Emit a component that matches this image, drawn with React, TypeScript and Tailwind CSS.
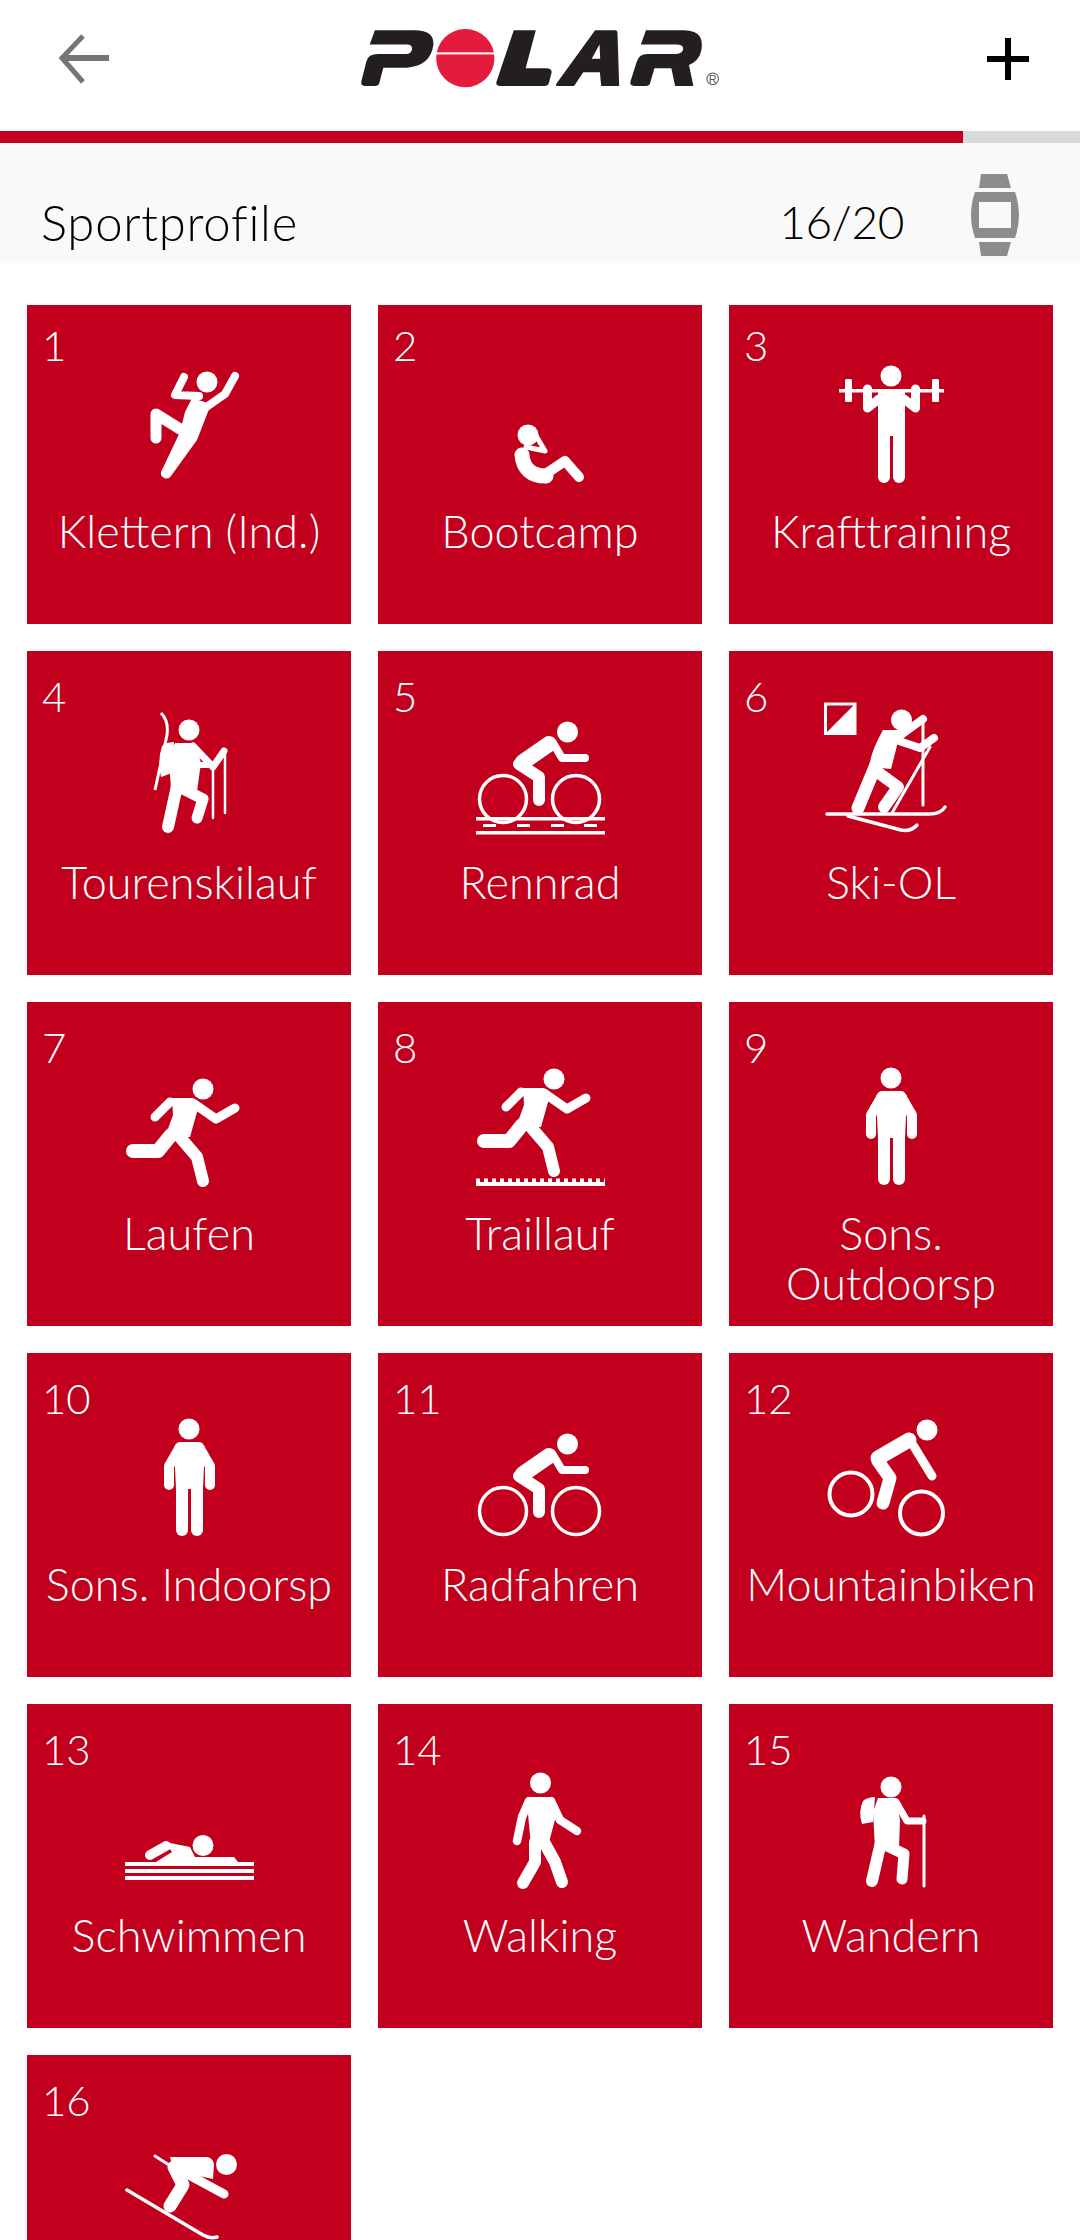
import React from 'react';

const FONT = "font-['Lato','Liberation_Sans',sans-serif]";

// icons are drawn in card coordinates (card = 324 wide), the svg shows y 50..206
const Line = ({ d, w }: { d: string; w: number }) => (
  <path d={d} fill="none" stroke="#fff" strokeWidth={w} strokeLinecap="round" strokeLinejoin="round" />
);
const Head = ({ x, y }: { x: number; y: number }) => <circle cx={x} cy={y} r={10.5} fill="#fff" />;

const Person = () => (
  <>
    <Head x={162} y={76} />
    <path d="M155 89H170Q175 89 178 94L176 136H149L147 94Q150 89 155 89Z" fill="#fff" />
    <Line d="M153 94L142 113V132" w={10} />
    <Line d="M172 94L183 113V132" w={10} />
    <Line d="M155 130V177" w={12} />
    <Line d="M170 130V177" w={12} />
  </>
);

const Runner = () => (
  <>
    <Head x={176} y={87} />
    <path d="M145 96H166L172 103L163 135H138L146 113Z" fill="#fff" />
    <Line d="M143 100L128 115" w={9} />
    <Line d="M166 101L189 117L208 106" w={9} />
    <Line d="M144 133L131 149H106" w={14} />
    <Line d="M152 134L170 155L176 179" w={12} />
  </>
);

const Rider = () => (
  <>
    <Head x={189.5} y={81} />
    <Line d="M171 93L145 111" w={16} />
    <Line d="M175 92L184 107H207" w={8} />
    <Line d="M141 113L161 126V149" w={12} />
    <circle cx={125} cy={148} r={23.5} fill="none" stroke="#fff" strokeWidth={3.5} />
    <circle cx={198} cy={148} r={23.5} fill="none" stroke="#fff" strokeWidth={3.5} />
  </>
);

const icons: Record<number, React.ReactNode> = {
  1: (
    <>
      <Head x={180} y={82} />
      <Line d="M157 77L148 95L172 96" w={8} />
      <Line d="M208 76L198 94L178 108" w={8} />
      <path d="M165 98L184 104L170 140L144 176A5.500 5.500 0 0 1 134 172L153 132L158 112Z" fill="#fff" />
      <Line d="M153 129L129 114V138" w={11} />
    </>
  ),
  2: (
    <>
      <circle cx={150} cy={135} r={10.5} fill="#fff" />
      <Line d="M157 134L167 151L148 147" w={5} />
      <Line d="M144 155Q146 176 168 176" w={15} />
      <Line d="M166 175L187 161L201 177" w={10} />
    </>
  ),
  3: (
    <>
      <Head x={162} y={76} />
      <rect x={110} y={89} width={105} height={3.500} fill="#fff" />
      <rect x={116} y={79} width={7} height={23} rx={1.500} fill="#fff" />
      <rect x={203} y={79} width={7} height={23} rx={1.500} fill="#fff" />
      <path d="M149 89H176L176 136H149Z" fill="#fff" />
      <Line d="M138.500 89V108L150 99" w={9} />
      <Line d="M186.500 89V108L175 99" w={9} />
      <Line d="M155 130V177" w={12} />
      <Line d="M170 130V177" w={12} />
    </>
  ),
  4: (
    <>
      <Head x={162} y={79} />
      <path d="M134 62Q142 70 140 84L128 139" fill="none" stroke="#fff" strokeWidth={3} />
      <path d="M135 95Q140 91 147 91L145 122L134 126Q130 110 135 95Z" fill="#fff" />
      <path d="M148 92H168L174 112L170 140L144 140L142 105Z" fill="#fff" />
      <Line d="M166 95L186 116L197 100" w={7} />
      <Line d="M170 114H187" w={6} />
      <Line d="M198 100V162" w={2.500} />
      <Line d="M186 118V167" w={2.500} />
      <Line d="M150 135L141 176" w={12} />
      <Line d="M152 136L176 148L170 167" w={11} />
    </>
  ),
  5: (
    <>
      <Rider />
      <rect x={98} y={166} width={129} height={3.500} fill="#fff" />
      <rect x={98} y={180} width={129} height={3.500} fill="#fff" />
      <rect x={105} y={173} width={13} height={3} fill="#fff" />
      <rect x={139} y={173} width={13} height={3} fill="#fff" />
      <rect x={173} y={173} width={13} height={3} fill="#fff" />
      <rect x={206} y={173} width={13} height={3} fill="#fff" />
    </>
  ),
  6: (
    <>
      <rect x={96.500} y={53} width={29.500} height={29.500} fill="none" stroke="#fff" strokeWidth={3} />
      <path d="M97 82L125 54V82Z" fill="#fff" />
      <Head x={172.500} y={69} />
      <path d="M154 79H172L162 118L140 116Q142 100 154 79Z" fill="#fff" />
      <Line d="M172 84L194 68" w={8} />
      <Line d="M170 90L191 97L205 87" w={8} />
      <Line d="M194 68V154" w={3} />
      <Line d="M201 96L163 162" w={3} />
      <Line d="M146 116L129 157" w={13} />
      <Line d="M147 120L169 136L155 156" w={12} />
      <path d="M98 163H200Q212 163 216 156" fill="none" stroke="#fff" strokeWidth={3.500} strokeLinecap="round" />
      <path d="M119 165L172 179Q182 181 188 174" fill="none" stroke="#fff" strokeWidth={3.500} strokeLinecap="round" />
    </>
  ),
  7: <Runner />,
  8: (
    <>
      <g transform="translate(0 -10)">
        <Runner />
      </g>
      <rect x={98} y={180} width={129} height={4} fill="#fff" />
      <path d="M98 178.500H227" stroke="#fff" strokeWidth={4} strokeDasharray="4 4" fill="none" />
    </>
  ),
  9: <Person />,
  10: <Person />,
  11: (
    <g transform="translate(0 10)">
      <Rider />
    </g>
  ),
  12: (
    <>
      <Head x={198} y={77} />
      <Line d="M180 87L149 105" w={15} />
      <Line d="M184 92L203 123" w={9} />
      <Line d="M149 108L161 125L154 150" w={13} />
      <circle cx={122} cy={141} r={21.500} fill="none" stroke="#fff" strokeWidth={4} />
      <circle cx={192.500} cy={160} r={21.500} fill="none" stroke="#fff" strokeWidth={4} />
    </>
  ),
  13: (
    <>
      <Head x={176} y={141.500} />
      <path d="M138 138L163 143L168 153H207L211 158H129L145 148Z" fill="#fff" />
      <Line d="M123 151L139 142" w={10} />
      <rect x={98} y={158} width={129} height={4} fill="#fff" />
      <rect x={98} y={165} width={129} height={4} fill="#fff" />
      <rect x={98} y={172} width={129} height={4} fill="#fff" />
    </>
  ),
  14: (
    <>
      <Head x={162.500} y={79} />
      <path d="M153 93H172L178 112L170 142H153L150 110Z" fill="#fff" />
      <Line d="M151 97L144 113L139 137" w={8.500} />
      <Line d="M173 97L182 116L199 127" w={8.500} />
      <Line d="M157 138V158L145 179" w={12} />
      <Line d="M166 138L177 158L184 178" w={12} />
    </>
  ),
  15: (
    <>
      <Head x={162} y={83} />
      <path d="M134 97Q139 93 146 93L144 118L133 120Q129 107 134 97Z" fill="#fff" />
      <path d="M149 94H167L171 116L170 144L146 144L144 108Z" fill="#fff" />
      <Line d="M167 98L178 117H194" w={7} />
      <Line d="M195 112V182" w={3} />
      <Line d="M152 138L143 177" w={12} />
      <Line d="M154 140L175 150L173 175" w={11} />
    </>
  ),
  16: (
    <>
      <Head x={199.500} y={109.500} />
      <Line d="M128 101L142 110" w={3} />
      <path d="M143 102H180Q186 103 187 109L186 124L158 118L150 126Z" fill="#fff" />
      <Line d="M160 119L197 139" w={9} />
      <Line d="M147 112L156 130L143 151" w={13} />
      <path d="M100 135L176 180Q183 184 190 182" fill="none" stroke="#fff" strokeWidth={3.500} strokeLinecap="round" />
    </>
  ),
};

// the label of card 16 lies below the fold
const sports = [
  'Klettern (Ind.)', 'Bootcamp', 'Krafttraining',
  'Tourenskilauf', 'Rennrad', 'Ski-OL',
  'Laufen', 'Traillauf', 'Sons. Outdoorsp',
  'Sons. Indoorsp', 'Radfahren', 'Mountainbiken',
  'Schwimmen', 'Walking', 'Wandern',
  '',
];

function PolarLogo() {
  return (
    <svg viewBox="0 0 1200 270" className="w-[407px] h-[91.5px] mr-[22px] -mt-[7px]">
      <path fill="#231f20" d="M120 63H238Q295 63 293 105Q285 168 215 173H145L133 220Q131 227 122 227H90Q78 227 80 215L95 155Q100 133 130 133H212Q228 133 230 118Q230 105 215 105H105Z" />
      <circle cx={387} cy={145} r={86} fill="#e31b3c" />
      <rect x={295} y={128} width={184} height={6} fill="#fff" />
      <path fill="#231f20" d="M530 63H595L565 175H625Q645 175 641 190L633 220Q631 227 620 227H490Q476 227 479 215Z" />
      <path fill="#231f20" fillRule="evenodd" d="M770 63H830Q836 63 836 72L841 227H788L784 187H735L708 227H658Q652 227 656 220ZM783 105L760 147H785Z" />
      <path fill="#231f20" d="M920 63H1030Q1085 63 1085 105Q1085 150 1047 165L1060 227H1006L995 175H945L932 220Q930 227 920 227H885Q872 227 874 215L893 155Q900 133 925 133H1005Q1028 133 1030 118Q1030 105 1010 105H905Z" />
      <circle cx={1117} cy={206} r={17} fill="none" stroke="#555" strokeWidth={3} />
      <text x={1117} y={218} textAnchor="middle" fontSize={32} fill="#555" fontFamily="'Liberation Sans', sans-serif">R</text>
    </svg>
  );
}

function WatchIcon() {
  return (
    <svg viewBox="0 0 48 82" className="w-[48px] h-[82px] shrink-0">
      <path fill="#8c8c8c" d="M10 0H36L40 14H8Z" />
      <path fill="#8c8c8c" fillRule="evenodd" d="M4 18H44Q52 41 44 64H4Q-4 41 4 18ZM8 28V54H40V28Z" />
      <path fill="#8c8c8c" d="M8 68H40L36 82H10Z" />
    </svg>
  );
}

function SportCard({ no, name }: { no: number; name: string }) {
  return (
    <div className="relative h-[324px] bg-[#c2001e] text-white flex flex-col items-center pt-[50px]">
      <span className="absolute left-[15px] top-[20px] text-[42px] leading-[50px] font-light">{no}</span>
      <svg viewBox="0 50 324 156" className="w-[324px] h-[156px] shrink-0">
        {icons[no]}
      </svg>
      <p className="w-full px-[8px] text-center text-[45px] leading-[50px] font-light">{name}</p>
    </div>
  );
}

export default function App() {
  return (
    <div className={`${FONT} w-[1080px] h-[2240px] overflow-hidden bg-white flex flex-col`}>
      <header className="h-[131px] shrink-0 flex items-center justify-between pl-[58px] pr-[51px] pb-[14px]">
        <svg viewBox="0 0 52 50" className="w-[52px] h-[50px]">
          <path d="M25 2L4 24L25 48" fill="none" stroke="#757575" strokeWidth={5} />
          <path d="M6 24H51" fill="none" stroke="#757575" strokeWidth={6} />
        </svg>
        <PolarLogo />
        <svg viewBox="0 0 42 42" className="w-[42px] h-[42px]">
          <path d="M21 0V42M0 21H42" fill="none" stroke="#000" strokeWidth={6} />
        </svg>
      </header>

      <div className="h-[12px] shrink-0 bg-[#d9d9d9]">
        <div className="h-full w-[963px] bg-[#c2001e]" />
      </div>

      <div className="h-[120px] shrink-0 bg-[#f9f9f9] flex items-start pl-[41px] pr-[61px] pt-[31px] text-black leading-[56px] font-light">
        <span className="mt-[20px] text-[49px] tracking-[0.75px]">Sportprofile</span>
        <span className="ml-auto mr-[67px] mt-[20px] text-[46px] tracking-[-0.4px]">16/20</span>
        <WatchIcon />
      </div>

      <main className="flex-1 min-h-0 mt-[42px] overflow-hidden">
        <div className="-mt-[5px] pl-[27px] grid grid-cols-[repeat(3,324px)] gap-[27px]">
          {sports.map((name, i) => (
            <SportCard key={i} no={i + 1} name={name} />
          ))}
        </div>
      </main>
    </div>
  );
}
